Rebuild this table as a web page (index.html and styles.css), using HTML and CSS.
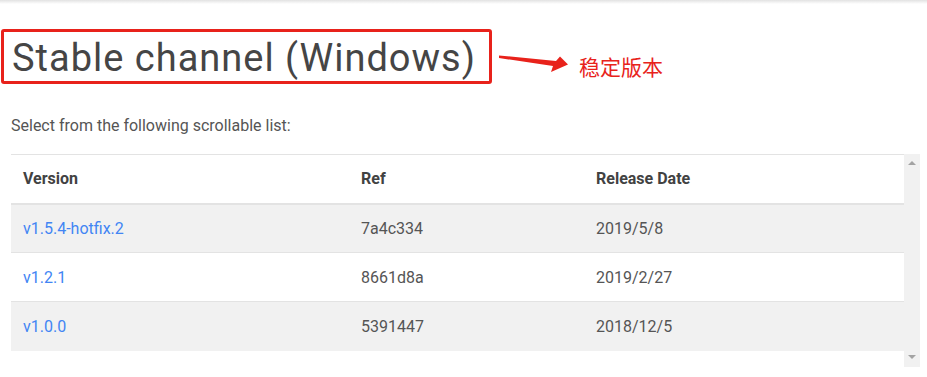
FILE: index.html
```html
<!DOCTYPE html>
<html lang="en">
<head>
  <meta charset="UTF-8" />
  <title>Stable channel (Windows)</title>
  <link rel="stylesheet" href="styles.css">
</head>
<body>
  <div class="top-shade"></div>

  <div class="page">
    <!-- heading + annotation -->
    <div class="title-row">
      <h1 class="title">Stable channel (Windows)</h1>
      <svg class="note-arrow" width="70" height="20" viewBox="0 0 70 20">
        <polygon points="0,1.5 57,7 61,2.5 69,10.5 52,18 54,12 0,4" fill="#e8221b" />
      </svg>
      <span class="note-text">稳定版本</span>
    </div>

    <p class="intro">Select from the following scrollable list:</p>

    <div class="list-box">
      <div class="list-scroll">
        <table class="versions">
          <colgroup>
            <col class="col-version">
            <col class="col-ref">
            <col class="col-date">
          </colgroup>
          <thead>
            <tr>
              <th>Version</th>
              <th>Ref</th>
              <th>Release Date</th>
            </tr>
          </thead>
          <tbody>
            <tr>
              <td><a href="#">v1.5.4-hotfix.2</a></td>
              <td>7a4c334</td>
              <td>2019/5/8</td>
            </tr>
            <tr>
              <td><a href="#">v1.2.1</a></td>
              <td>8661d8a</td>
              <td>2019/2/27</td>
            </tr>
            <tr>
              <td><a href="#">v1.0.0</a></td>
              <td>5391447</td>
              <td>2018/12/5</td>
            </tr>
          </tbody>
        </table>
      </div>
      <div class="fake-scrollbar">
        <span class="arrow-up"></span>
        <span class="arrow-down"></span>
      </div>
    </div>
  </div>
</body>
</html>
```

FILE: styles.css
```css
* { margin: 0; padding: 0; box-sizing: border-box; }
body {
  background: #fff;
  font-family: Roboto, "Liberation Sans", sans-serif;
  color: #555;
}
.top-shade {
  height: 4px;
  background: linear-gradient(#e2e2e2, #fff);
}
.page {
  padding: 0 7px 0 11px;
}

.title-row {
  display: flex;
  align-items: flex-start;
  margin-top: 25px;
  margin-left: -10px;
}
.title {
  flex-shrink: 0;
  width: 491px;
  height: 55px;
  border: 3px solid #e8221b;
  border-radius: 3px;
  padding: 3px 0 0 8px;
  font-size: 38px;
  line-height: 46px;
  font-weight: 400;
  letter-spacing: 1px;
  color: #454545;
  white-space: nowrap;
  overflow: hidden;
}
.note-arrow {
  margin: 25px 0 0 7px;
  flex-shrink: 0;
}
.note-text {
  margin: 27px 0 0 10px;
  font-family: "Noto Sans CJK SC", sans-serif;
  font-size: 21px;
  line-height: 21px;
  color: #e8221b;
}

.intro {
  margin-top: 30px;
  font-size: 16px;
  line-height: 24px;
  color: #555;
}

.list-box {
  display: flex;
  margin-top: 16px;
  height: 213px;
}
.list-scroll {
  flex: 1;
  overflow: hidden;
}
.versions {
  width: 100%;
  table-layout: fixed;
  border-collapse: collapse;
  font-size: 16px;
}
.col-version { width: 338px; }
.col-ref { width: 235px; }
.versions th,
.versions td {
  height: 49px;
  padding: 0 12px;
  text-align: left;
  white-space: nowrap;
}
.versions thead tr {
  border-top: 1px solid #e3e3e3;
  border-bottom: 2px solid #e3e3e3;
}
.versions th {
  font-weight: 700;
  color: #424242;
  height: 49px;
}
.versions tbody tr {
  border-bottom: 1px solid #e3e3e3;
}
.versions tbody tr:nth-child(odd) {
  background: #f1f1f1;
}
.versions tbody tr:last-child {
  border-bottom: none;
}
.versions td { color: #555; }
.versions a {
  color: #4285f4;
  text-decoration: none;
}

.fake-scrollbar {
  width: 16px;
  background: #f1f1f1;
  display: flex;
  flex-direction: column;
  justify-content: space-between;
  align-items: center;
  padding: 7px 0 8px;
}
.arrow-up,
.arrow-down {
  width: 0;
  height: 0;
  border-left: 4px solid transparent;
  border-right: 4px solid transparent;
}
.arrow-up { border-bottom: 4px solid #a3a3a3; }
.arrow-down { border-top: 4px solid #a3a3a3; }
```
